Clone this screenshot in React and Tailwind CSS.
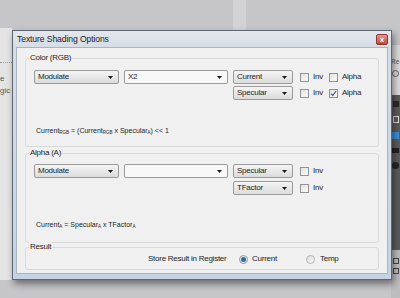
import React from "react";

const T = "text-[8px] tracking-[-0.25px] leading-none text-[#242424]";

const Arrow = () => (
  <svg width="5" height="3" viewBox="0 0 5 3" className="shrink-0">
    <path d="M0 0H5L2.5 3Z" fill="#1a1a1a" />
  </svg>
);

const Dropdown = ({ w, label, light }) => (
  <div
    className={`flex items-center justify-between h-[14px] ${w} border border-[#9a9a9a] rounded-[2px] pl-[3px] pr-[5px] ${
      light ? "bg-[#f8f8f8]" : "bg-gradient-to-b from-[#f5f5f5] to-[#dcdcdc]"
    }`}
  >
    <span className={T}>{label}</span>
    <Arrow />
  </div>
);

const Check = ({ checked }) => (
  <span className="w-[9px] h-[9px] border border-[#939393] bg-gradient-to-br from-[#e2e2e2] to-[#fbfbfb] flex items-center justify-center shrink-0">
    {checked && (
      <svg width="7" height="7" viewBox="0 0 7 7">
        <path d="M1 3.6L2.8 5.6L6 1" stroke="#3b5a8e" strokeWidth="1.2" fill="none" />
      </svg>
    )}
  </span>
);

const CheckLabel = ({ checked, label }) => (
  <div className="flex items-center gap-[4px]">
    <Check checked={checked} />
    <span className={T}>{label}</span>
  </div>
);

const Radio = ({ on }) => (
  <span
    className={`w-[9px] h-[9px] rounded-full border flex items-center justify-center shrink-0 ${
      on ? "border-[#8a9aa6] bg-[#e8eef2]" : "border-[#b4b4b4] bg-gradient-to-br from-[#dcdcdc] to-[#f8f8f8]"
    }`}
  >
    {on && <span className="w-[5px] h-[5px] rounded-full bg-[#2c6f8e]" />}
  </span>
);

const GroupBox = ({ label, className, children }) => (
  <div className={`border border-[#d9d9d9] rounded-[3px] mx-[8px] ${className}`}>
    <div className="-mt-[6px] ml-[3px] px-[1px] w-fit h-[10px] flex items-center bg-[#f0f0f0]">
      <span className={T}>{label}</span>
    </div>
    {children}
  </div>
);

export default function App() {
  return (
    <div className="relative w-[400px] h-[298px] overflow-hidden bg-[#c6c6c9] font-['Liberation_Sans',Arial,sans-serif]">
      {/* desktop background */}
      <div className="flex h-full">
        <div className="w-[12px] flex flex-col">
          <div className="h-[28px] bg-[#c6c6c9]" />
          <div className="flex-1 bg-[#e4e4e5] flex flex-col">
            <div className="mt-[34px] border-t border-dotted border-[#9a9a9a]" />
            <div className="mt-[10px] text-[8px] leading-[12px] text-[#555]">e</div>
            <div className="text-[8px] leading-[12px] text-[#555]">gic</div>
            <div className="flex-1" />
            <div className="h-[18px] bg-[#c6c6c9]" />
          </div>
        </div>
        <div className="flex-1 flex flex-col">
          <div className="h-[30px] flex">
            <div className="w-[221px]" />
            <div className="w-[13px] bg-[#d3d3d6]" />
          </div>
        </div>
        <div className="w-[9px] flex flex-col">
          <div className="h-[45px] bg-[#c6c6c9]" />
          <div className="h-[50px] bg-[#dcdcdd] flex flex-col">
            <div className="mt-[12px] text-[6.5px] leading-[10px] text-[#555]">Re</div>
            <div className="mt-[3px] ml-[1px] w-[7px] h-[7px] rounded-full border border-[#666]" />
          </div>
          <div className="h-[155px] bg-[#5c5c5e] flex flex-col items-center gap-[9px] pt-[6px]">
            <div className="w-[6px] h-[6px] bg-[#2b2b2b]" />
            <div className="w-[6px] h-[7px] border border-[#ddd]" />
            <div className="w-[7px] h-[7px] bg-[#3d8ed8]" />
            <div className="w-[7px] h-[5px] bg-[#222]" />
            <div className="w-[7px] h-[7px] rounded-full bg-[#262626]" />
          </div>
          <div className="flex-1 bg-[#bdbdbf] flex flex-col items-center gap-[4px] pt-[8px]">
            <div className="w-[6px] h-[6px] border border-[#444]" />
            <div className="w-[6px] h-[6px] border border-[#444]" />
          </div>
        </div>
      </div>

      {/* dialog window */}
      <div className="absolute left-[12px] top-[30px] w-[380px] h-[250px] flex flex-col border border-[#5d6873] bg-[#d5dee8] shadow-[2px_4px_7px_rgba(0,0,0,0.45)]">
        <div className="h-[16px] flex items-center justify-between bg-gradient-to-b from-[#e4e8ed] to-[#d6dde5] pl-[4px] pr-[3px]">
          <span className="text-[8.6px] tracking-[-0.1px] leading-none text-[#1a1a1a]">Texture Shading Options</span>
          <div className="w-[12px] h-[11px] rounded-[2px] border border-[#8a3a30] bg-gradient-to-b from-[#e39a8c] to-[#c2473a] flex items-center justify-center">
            <span className="text-[7px] leading-none font-bold text-white">x</span>
          </div>
        </div>
        <div className="flex-1 flex flex-col px-[3px] pb-[5px] bg-gradient-to-b from-[#d6dde5] to-[#c3d3e4]">
          <div className="flex-1 flex flex-col bg-[#f0f0f0] border border-[#a9b6c2]">
            {/* Color */}
            <GroupBox label="Color (RGB)" className="mt-[10px] h-[89px]">
              <div className="mt-[7px] pl-[8px] grid grid-cols-[85px_104px_60px_auto] gap-x-[5px] gap-y-[2px] items-center">
                <Dropdown w="w-[85px]" label="Modulate" />
                <Dropdown w="w-[104px]" label="X2" light />
                <Dropdown w="w-[60px]" label="Current" />
                <div className="flex items-center gap-[6px] ml-[2px]">
                  <CheckLabel label="Inv" />
                  <CheckLabel label="Alpha" />
                </div>
                <div className="col-start-3">
                  <Dropdown w="w-[60px]" label="Specular" />
                </div>
                <div className="flex items-center gap-[6px] ml-[2px]">
                  <CheckLabel label="Inv" />
                  <CheckLabel label="Alpha" checked />
                </div>
              </div>
              <div className="mt-[26px] pl-[10px] h-[10px] leading-[10px] text-[7px] text-[#242424]">
                Current<sub className="text-[4.5px] align-baseline">RGB</sub> = (Current
                <sub className="text-[4.5px] align-baseline">RGB</sub> x Specular
                <sub className="text-[4.5px] align-baseline">A</sub>) &lt;&lt; 1
              </div>
            </GroupBox>

            {/* Alpha */}
            <GroupBox label="Alpha (A)" className="mt-[6px] h-[90px]">
              <div className="mt-[6px] pl-[8px] grid grid-cols-[85px_104px_60px_auto] gap-x-[5px] gap-y-[3px] items-center">
                <Dropdown w="w-[85px]" label="Modulate" />
                <Dropdown w="w-[104px]" label="" light />
                <Dropdown w="w-[60px]" label="Specular" />
                <div className="flex items-center ml-[2px]">
                  <CheckLabel label="Inv" />
                </div>
                <div className="col-start-3">
                  <Dropdown w="w-[60px]" label="TFactor" />
                </div>
                <div className="flex items-center ml-[2px]">
                  <CheckLabel label="Inv" />
                </div>
              </div>
              <div className="mt-[25px] pl-[10px] h-[10px] leading-[10px] text-[7px] text-[#242424]">
                Current<sub className="text-[4.5px] align-baseline">A</sub> = Specular
                <sub className="text-[4.5px] align-baseline">A</sub> x TFactor
                <sub className="text-[4.5px] align-baseline">A</sub>
              </div>
            </GroupBox>

            {/* Result */}
            <GroupBox label="Result" className="mt-[4px] h-[23px]">
              <div className="flex items-center h-[12px] mt-[1px] pl-[122px]">
                <span className={`w-[78px] whitespace-nowrap ${T}`}>Store Result in Register</span>
                <div className="ml-[13px] flex items-center gap-[4px] w-[58px]">
                  <Radio on />
                  <span className={T}>Current</span>
                </div>
                <div className="ml-[9px] flex items-center gap-[5px]">
                  <Radio />
                  <span className={T}>Temp</span>
                </div>
              </div>
            </GroupBox>
          </div>
        </div>
      </div>
    </div>
  );
}
